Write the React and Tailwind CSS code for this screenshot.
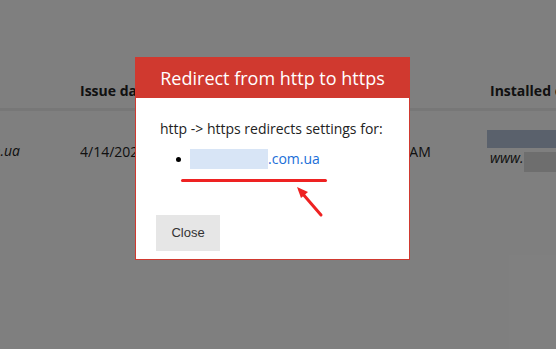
import React from "react";

const App = () => {
  return (
    <div className="relative w-[556px] h-[349px] overflow-hidden bg-white font-['Open_Sans',sans-serif] text-[#222]">
      {/* Table behind the overlay */}
      <div className="pt-[82px]">
        <div className="flex h-[29px] border-b-[3px] border-[#eeeeee] text-[14px] font-bold leading-[16px]">
          <div className="w-[80px] shrink-0" />
          <div className="w-[410px] shrink-0 pt-[1px]">Issue date</div>
          <div className="pt-[1px] whitespace-nowrap">Installed on</div>
        </div>
        <div className="flex pt-[18px] text-[14px] leading-[18px]">
          <div className="w-[80px] shrink-0 overflow-hidden relative">
            <span className="italic absolute right-[60px] top-[13px] whitespace-nowrap">site.com.ua</span>
          </div>
          <div className="w-[290px] shrink-0 pt-[14px] whitespace-nowrap overflow-hidden">4/14/2021</div>
          <div className="w-[117px] shrink-0 pt-[14px] whitespace-nowrap overflow-hidden">10:20 AM</div>
          <div className="flex flex-col">
            <div className="w-[80px] h-[18px] mt-[1px] bg-[#b4c2d8]" />
            <div className="flex items-start mt-[1px] italic">
              <span className="ml-[3px]">www.</span>
              <div className="w-[40px] h-[20px] mt-[3px] bg-[#dddddd]" />
            </div>
          </div>
        </div>
      </div>

      {/* Overlay */}
      <div className="absolute inset-0 bg-black/50" />

      {/* Modal */}
      <div className="absolute left-[135px] top-[57px] w-[275px] h-[203px] bg-white border border-[#d0392f] flex flex-col">
        <div className="h-[40px] bg-[#d0392f] text-white text-[18px] flex items-center justify-center">
          Redirect from http to https
        </div>
        <div className="px-[24px] pt-[22px] text-[14px] leading-[18px] text-[#222]">
          <p>http -&gt; https redirects settings for:</p>
          <ul className="mt-[11px] pl-[16px] list-none">
            <li className="flex items-center">
              <span className="w-[5px] h-[5px] rounded-full bg-black mr-[9px]" />
              <a className="flex items-center text-[#1a6ed8]">
                <span className="inline-block w-[78px] h-[20px] bg-[#d8e5f6]" />
                .com.ua
              </a>
            </li>
          </ul>
          <div className="relative h-[45px]">
            <div className="absolute left-[21px] top-[10px] w-[146px] h-[3px] rounded-full bg-[#ee2222]" />
            <svg className="absolute left-[130px] top-[15px]" width="40" height="34" viewBox="0 0 40 34">
              <line x1="31" y1="31" x2="12" y2="9" stroke="#ee2222" strokeWidth="3" strokeLinecap="round" />
              <polygon points="7,3 18,8 11,14" fill="#ee2222" />
            </svg>
          </div>
        </div>
        <div className="px-[20px] pt-[1px]">
          <button className="w-[64px] h-[36px] bg-[#e6e6e6] text-[13px] text-[#333] font-['Liberation_Sans',Arial,sans-serif]">
            Close
          </button>
        </div>
      </div>
    </div>
  );
};

export default App;
